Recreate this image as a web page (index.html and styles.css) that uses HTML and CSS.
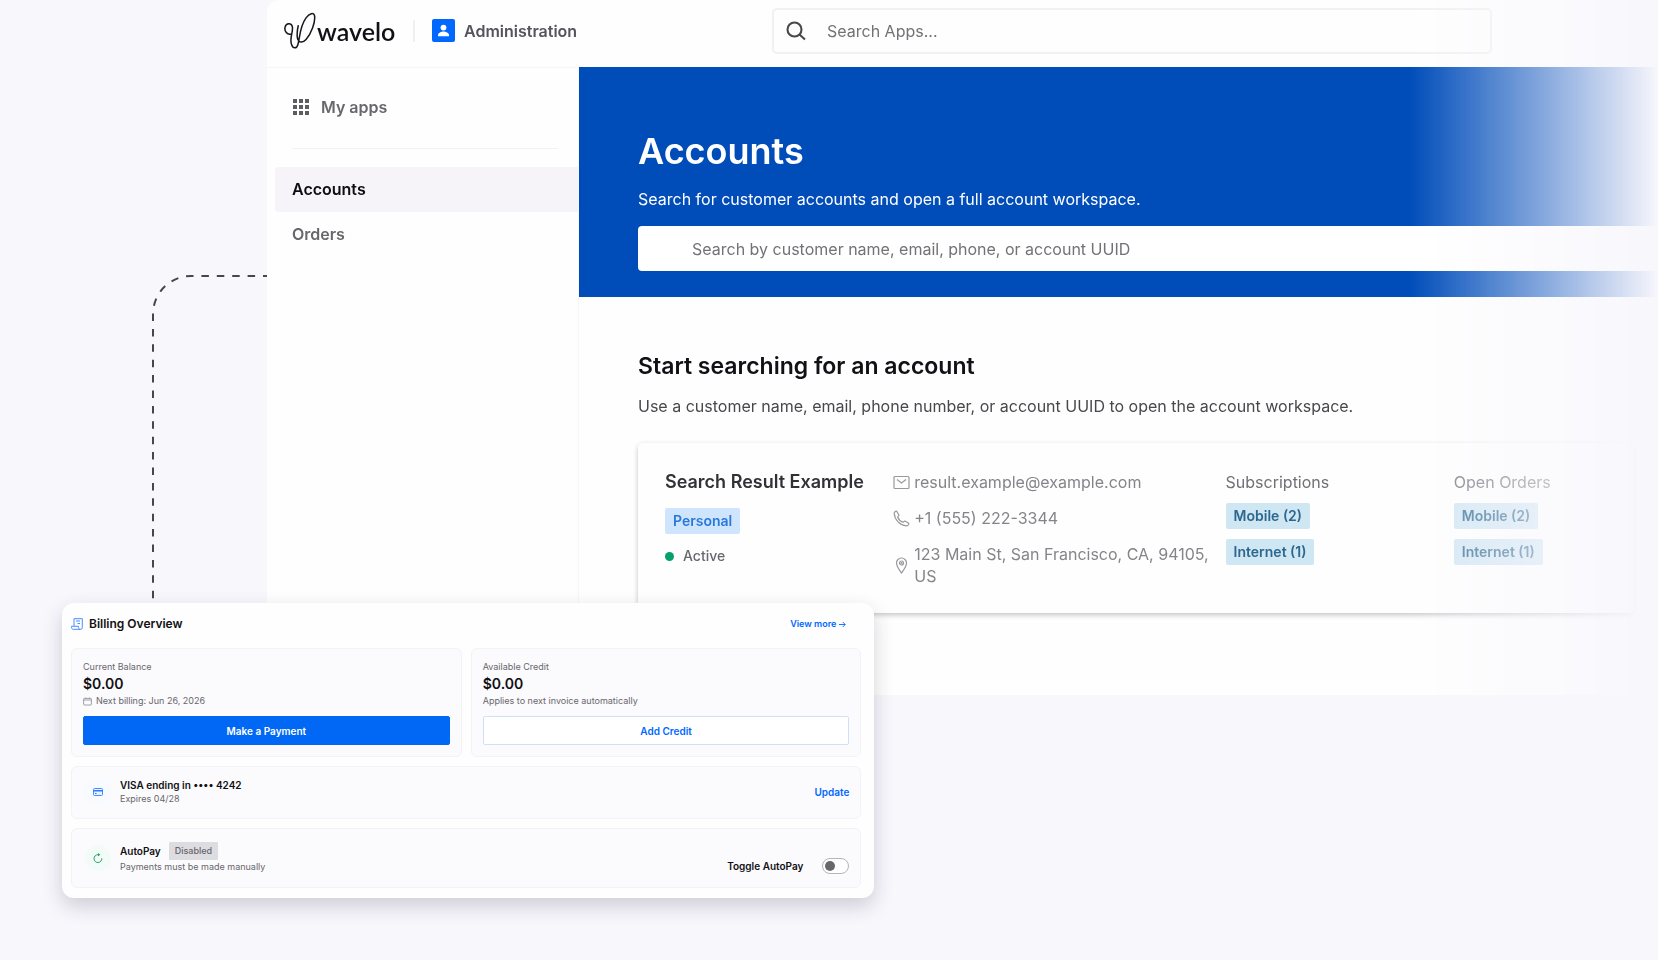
FILE: index.html
```html
<!DOCTYPE html>
<html lang="en">
<head>
<meta charset="utf-8">
<title>Wavelo Administration</title>
<link rel="stylesheet" href="styles.css">
</head>
<body>
<div class="stage">
  <svg class="connector" width="116" height="330" viewBox="0 0 116 330" aria-hidden="true">
    <path d="M116 2H40A38 38 0 0 0 2 40V330" fill="none" stroke="#47464b" stroke-width="2" stroke-dasharray="7.5 7.9" stroke-dashoffset="3.5"/>
  </svg>

  <div class="app">
    <header class="topbar">
      <a class="brand" href="#">
        <svg width="33" height="37" viewBox="66 36 100 113" fill="none" stroke="#16151a" stroke-width="4.6" stroke-linecap="round" stroke-linejoin="round" aria-hidden="true">
          <path d="M92 103C78 108 69 94 72 82C75 70 90 68 94 80C98 96 84 116 92 136C96 148 107 149 111 136C118 112 116 82 136 54C146 40 160 36 162 48C165 66 152 102 136 120C123 134 110 128 109 111C108 98 110 87 112 78"/>
        </svg>
        <span class="brand-name">wavelo</span>
      </a>
      <span class="divider"></span>
      <div class="product">
        <svg width="23" height="23" viewBox="0 0 23 23" aria-hidden="true">
          <rect width="23" height="23" rx="2" fill="#0068ff"/>
          <circle cx="11.5" cy="8.6" r="2.9" fill="#fff"/>
          <path d="M6 17.2v-1c0-2.4 3.500-3.600 5.500-3.600s5.500 1.200 5.500 3.600v1z" fill="#fff"/>
        </svg>
        <span>Administration</span>
      </div>
      <label class="app-search">
        <svg width="22" height="22" viewBox="0 0 22 22" fill="none" stroke="#48474b" stroke-width="2.1" aria-hidden="true"><circle cx="9.500" cy="9.500" r="7"/><path d="M14.500 14.500l5.500 5"/></svg>
        <input type="text" placeholder="Search Apps..." aria-label="Search Apps">
      </label>
    </header>

    <div class="body">
      <nav class="sidebar">
        <a class="apps-link" href="#">
          <svg width="16" height="16" viewBox="0 0 16 16" fill="#5d5c61" aria-hidden="true">
            <path d="M0 0h4v4H0zM6 0h4v4H6zM12 0h4v4h-4zM0 6h4v4H0zM6 6h4v4H6zM12 6h4v4h-4zM0 12h4v4H0zM6 12h4v4H6zM12 12h4v4h-4z"/>
          </svg>
          <span>My apps</span>
        </a>
        <hr class="nav-rule">
        <a class="nav-item nav-item-active" href="#">Accounts</a>
        <a class="nav-item" href="#">Orders</a>
      </nav>

      <main class="main">
        <section class="hero">
          <h1>Accounts</h1>
          <p>Search for customer accounts and open a full account workspace.</p>
          <input class="hero-search" type="text" placeholder="Search by customer name, email, phone, or account UUID" aria-label="Search accounts">
        </section>
        <section class="content">
          <h2>Start searching for an account</h2>
          <p class="lead">Use a customer name, email, phone number, or account UUID to open the account workspace.</p>
          <article class="result">
            <div class="who">
              <h3>Search Result Example</h3>
              <span class="tag tag-personal">Personal</span>
              <span class="status"><i class="dot"></i>Active</span>
            </div>
            <ul class="contact">
              <li>
                <svg width="17" height="17" viewBox="0 0 17 17" fill="none" stroke="#99989c" stroke-width="1.200" aria-hidden="true"><rect x="1" y="2.500" width="15" height="12" rx="1"/><path d="M4 5.500l4.500 3.500L13 5.500"/></svg>
                <span>result.example@example.com</span>
              </li>
              <li>
                <svg width="17" height="17" viewBox="0 0 17 17" fill="none" stroke="#99989c" stroke-width="1.200" stroke-linejoin="round" aria-hidden="true"><path d="M1.200 3.300C1.200 2 2.500 1 3.700 1.200L6 5.200L4.700 7C5.500 9.300 7.500 11.400 10 12.300L11.800 11L15.800 13.200C16 14.600 14.800 15.900 13.300 15.800C7 15.300 1.600 9.800 1.200 3.300z"/></svg>
                <span>+1 (555) 222-3344</span>
              </li>
              <li>
                <svg width="17" height="17" viewBox="0 0 17 17" fill="none" stroke="#99989c" stroke-width="1.200" aria-hidden="true"><path d="M8.500 16C6 12.500 3.500 9.500 3.500 6a5 5 0 0 1 10 0c0 3.500-2.500 6.500-5 10z"/><circle cx="8.500" cy="6" r="2"/><circle cx="8.500" cy="6" r=".5"/></svg>
                <span>123 Main St, San Francisco, CA, 94105, US</span>
              </li>
            </ul>
            <div class="products">
              <h4>Subscriptions</h4>
              <span class="tag tag-product">Mobile (2)</span>
              <span class="tag tag-product">Internet (1)</span>
            </div>
            <div class="products products-open">
              <h4>Open Orders</h4>
              <span class="tag tag-product">Mobile (2)</span>
              <span class="tag tag-product">Internet (1)</span>
            </div>
          </article>
        </section>
      </main>
    </div>
  </div>

  <section class="billing">
    <header class="billing-head">
      <svg width="12" height="12" viewBox="0 0 12 12" fill="none" stroke="#4a8dff" stroke-width="1" aria-hidden="true"><path d="M3 8V.7h8.300v8.800a1.700 1.700 0 0 1-1.700 1.800H2.200C1.200 11.300.5 10.500.5 9.500V8.300h7v1.300c0 1 .8 1.700 1.700 1.700M5 3h4M6.500 5.500H9"/></svg>
      <h2>Billing Overview</h2>
      <a href="#">View more
        <svg width="7" height="7" viewBox="0 0 7 7" fill="none" stroke="#0068ff" stroke-width=".9" aria-hidden="true"><path d="M0 3.500h6.200M3.700 1l2.500 2.500L3.700 6"/></svg>
      </a>
    </header>
    <div class="balances">
      <div class="box balance">
        <span class="caption">Current Balance</span>
        <strong class="amount">$0.00</strong>
        <span class="note">
          <svg width="9" height="9" viewBox="0 0 9 9" fill="none" stroke="#8a898e" stroke-width=".8" aria-hidden="true"><rect x=".6" y="1.400" width="7.800" height="6.600" rx=".8"/><path d="M.6 3h7.800M2.500.6v1M6.500.6v1"/></svg>
          Next billing: Jun 26, 2026
        </span>
        <button class="btn btn-primary" type="button">Make a Payment</button>
      </div>
      <div class="box balance">
        <span class="caption">Available Credit</span>
        <strong class="amount">$0.00</strong>
        <span class="note">Applies to next invoice automatically</span>
        <button class="btn btn-outline" type="button">Add Credit</button>
      </div>
    </div>
    <div class="box row">
      <span class="round round-blue">
        <svg width="10" height="8" viewBox="0 0 10 8" aria-hidden="true"><rect x=".5" y=".5" width="9" height="7" rx="1" fill="#e8f1ff" stroke="#4a8dff"/><path d="M0 2h10v1.600H0zM2 5h1.600v1H2z" fill="#2f7dff"/></svg>
      </span>
      <div class="row-text">
        <strong>VISA ending in •••• 4242</strong>
        <span class="caption">Expires 04/28</span>
      </div>
      <a class="update" href="#">Update</a>
    </div>
    <div class="box row row-autopay">
      <span class="round round-green">
        <svg width="10" height="10" viewBox="0 0 10 10" fill="none" stroke="#1fa463" stroke-width="1" aria-hidden="true"><path d="M8.800 5.300A3.900 3.900 0 1 1 5 1.700h1.500"/><path d="M5 .1l2.300 1.600L5 3.300z" fill="#1fa463" stroke="none"/></svg>
      </span>
      <div class="row-text">
        <span class="row-title"><strong>AutoPay</strong><span class="disabled">Disabled</span></span>
        <span class="caption">Payments must be made manually</span>
      </div>
      <label class="toggle">Toggle AutoPay <input type="checkbox" role="switch"></label>
    </div>
  </section>
</div>
</body>
</html>
```

FILE: styles.css
```css
* {
  box-sizing: border-box;
}

body {
  margin: 0;
  background: #f8f7fc;
  color: #111014;
  font-family: Inter, "Liberation Sans", sans-serif;
  font-size: 16px;
  line-height: 24px;
}

h1, h2, h3, h4, p, ul {
  margin: 0;
  padding: 0;
}

a {
  color: inherit;
  text-decoration: none;
}

svg {
  display: block;
  flex: none;
}

input,
button {
  font: inherit;
}

.stage {
  position: relative;
  min-height: 100vh;
  padding-left: 267px;
}

.connector {
  position: absolute;
  left: 151px;
  top: 274px;
}

/* Application window, fading out towards the right edge */
.app {
  overflow: hidden;
  border-top-left-radius: 12px;
  background: #fefefe;
  mask-image: linear-gradient(to right, #000 calc(100% - 248px), transparent);
}

.topbar {
  display: flex;
  align-items: center;
  height: 67px;
  padding: 0 16px 6px;
}

.brand {
  display: flex;
  align-items: center;
  width: 130px;
}

.brand-name {
  margin-left: 1px;
  font-family: Lato, sans-serif;
  font-size: 25px;
  font-weight: 600;
}

.divider {
  width: 2px;
  height: 22px;
  margin-right: 17px;
  background: #f0eff3;
}

.product {
  display: flex;
  align-items: center;
  gap: 9px;
  width: 340px;
  color: #55545a;
  font-weight: 600;
}

.app-search {
  display: flex;
  align-items: center;
  flex: 1;
  gap: 20px;
  height: 46px;
  margin-right: 150px;
  padding: 0 11px;
  border: 2px solid #f1f0f4;
  border-radius: 5px;
}

.app-search input {
  flex: 1;
  min-width: 0;
  padding: 0;
  border: 0;
  background: none;
}

input::placeholder {
  color: #727176;
  opacity: 1;
}

.body {
  display: flex;
}

.sidebar {
  flex: none;
  width: 312px;
  padding: 27px 0 0 8px;
  border-top: 1px solid #f6f5f9;
  border-right: 1px solid #f6f5f9;
  color: #68676c;
  font-weight: 600;
}

.apps-link {
  display: flex;
  align-items: center;
  gap: 12px;
  padding-left: 18px;
}

.nav-rule {
  height: 1px;
  margin: 29px 20px 18px 17px;
  border: 0;
  background: #f1f0f4;
}

.nav-item {
  display: block;
  padding: 10px 17px 11px;
}

.nav-item-active {
  border-radius: 3px 0 0 3px;
  background: #f6f4f8;
  color: #0e0d11;
}

.main {
  flex: 1;
  min-width: 0;
}

.hero {
  padding: 62px 0 26px 59px;
  background: #004dba;
  color: #fff;
}

.hero h1 {
  font-size: 36px;
  font-weight: 600;
  line-height: 44px;
}

.hero p {
  margin: 14px 0 15px;
}

.hero-search {
  display: block;
  width: 100%;
  height: 45px;
  padding: 0 54px;
  border: 0;
  border-radius: 4px 0 0 4px;
  background: #fff;
}

.content {
  padding: 53px 24px 82px 59px;
}

.content h2 {
  font-size: 23px;
  font-weight: 600;
  line-height: 32px;
}

.lead {
  margin: 12px 0 25px;
  color: #48474b;
}

.result {
  display: grid;
  grid-template-columns: 228fr 332fr 228fr 180fr;
  padding: 28px 0 26px 27px;
  border-radius: 5px;
  background: #fefefe;
  box-shadow: 0 2px 5px rgba(40, 35, 50, 0.27);
  line-height: 22px;
}

.who,
.products {
  display: flex;
  flex-direction: column;
  align-items: flex-start;
}

.who h3 {
  color: #323136;
  font-size: 18px;
  font-weight: 600;
  line-height: 22px;
  white-space: nowrap;
}

.tag {
  padding: 2px 8px;
  border-radius: 2px;
  font-size: 14px;
  font-weight: 600;
}

.tag-personal {
  margin: 15px 0 11px;
  background: #cfe5fe;
  color: #2a78dc;
}

.status {
  display: flex;
  align-items: center;
  gap: 9px;
  color: #68676c;
  font-size: 14px;
  font-weight: 500;
}

.dot {
  width: 9px;
  height: 9px;
  border-radius: 50%;
  background: #06a06a;
}

.contact {
  display: flex;
  flex-direction: column;
  gap: 14px;
  padding-right: 8px;
  color: #858489;
  list-style: none;
}

.contact li {
  display: flex;
  align-items: center;
  gap: 4px;
}

.products {
  gap: 10px;
}

.products h4 {
  color: #707075;
  font-size: 16px;
  font-weight: 400;
}

.tag-product {
  background: #cfe6f3;
  color: #2b678e;
}

.products-open {
  opacity: 0.88;
}

/* Billing card floating over the application window */
.billing {
  position: absolute;
  left: 62px;
  top: 603px;
  width: 49%;
  padding: 9px 13px 10px 9px;
  border-radius: 12px;
  background: #fefefe;
  box-shadow: 0 8px 20px rgba(40, 35, 60, 0.2);
  font-size: 10px;
  line-height: 14px;
}

.billing-head {
  display: flex;
  align-items: center;
  gap: 6px;
  height: 24px;
  margin-bottom: 12px;
  padding-right: 15px;
}

.billing-head h2 {
  flex: 1;
  font-size: 12px;
  font-weight: 600;
}

.billing-head a {
  display: flex;
  align-items: center;
  gap: 3px;
  color: #0068ff;
  font-size: 9px;
  font-weight: 600;
}

.balances {
  display: grid;
  grid-template-columns: 1fr 1fr;
  gap: 9px;
}

.box {
  border: 1px solid #f3f2f6;
  border-radius: 6px;
  background: #fbfafd;
}

.balance {
  display: flex;
  flex-direction: column;
  padding: 11px;
}

.caption,
.note {
  color: #68676c;
  font-size: 9px;
  line-height: 14px;
}

.amount {
  font-size: 14px;
  font-weight: 600;
  line-height: 20px;
}

.note {
  display: flex;
  align-items: center;
  gap: 4px;
  margin-bottom: 8px;
}

.btn {
  height: 29px;
  padding: 0;
  border-radius: 2px;
  font-weight: 600;
}

.btn-primary {
  border: 1px solid #0068f5;
  background: #0068f5;
  color: #fff;
}

.btn-outline {
  border: 1px solid #cfe0fc;
  background: #fff;
  color: #0068ff;
}

.row {
  display: flex;
  align-items: center;
  gap: 9px;
  margin-top: 9px;
  padding: 11px 11px 12px 13px;
}

.round {
  display: grid;
  place-items: center;
  width: 26px;
  height: 26px;
  border-radius: 50%;
}

.round-blue {
  background: #f7faff;
}

.round-green {
  background: #f3fbf8;
}

.row-text {
  display: flex;
  flex: 1;
  flex-direction: column;
}

.row-text strong {
  font-weight: 600;
}

.row-title {
  display: flex;
  align-items: center;
  gap: 8px;
}

.disabled {
  padding: 2px 6px;
  border-radius: 1px;
  background: #dddce0;
  color: #68676c;
  font-size: 9px;
  font-weight: 500;
}

.row-autopay {
  padding: 13px 11px 13px 13px;
}

.update {
  color: #0068ff;
  font-weight: 600;
}

.toggle {
  display: flex;
  align-items: center;
  align-self: flex-end;
  gap: 19px;
  font-weight: 600;
}

.toggle input {
  width: 27px;
  height: 16px;
  margin: 0;
  padding: 2px;
  border: 1px solid #b5b4b9;
  border-radius: 8px;
  background: #fff;
  appearance: none;
}

.toggle input::before {
  display: block;
  width: 10px;
  height: 10px;
  border-radius: 50%;
  background: #68676c;
  content: "";
}

.toggle input:checked::before {
  margin-left: auto;
  background: #0068ff;
}
```
